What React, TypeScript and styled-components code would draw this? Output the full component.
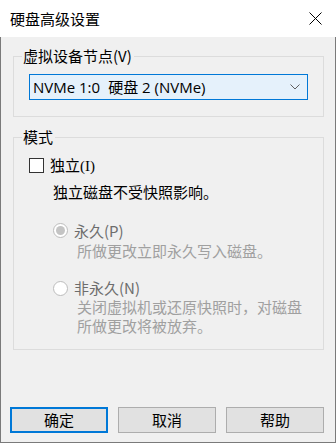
import React from "react";
import styled, { createGlobalStyle } from "styled-components";

const Global = createGlobalStyle`
  html, body { margin: 0; padding: 0; background: #ffffff; }
  body { font-family: "Noto Sans CJK SC", "Noto Sans", sans-serif; }
  * { box-sizing: border-box; }
`;

const Window = styled.div`
  width: 336px;
  height: 443px;
  display: flex;
  flex-direction: column;
  font-size: 15px;
  color: #000;
`;

const TitleBar = styled.div`
  height: 37px;
  flex: none;
  background: #ffffff;
  display: flex;
  align-items: center;
  justify-content: space-between;
  padding: 0 14px 0 10px;
  font-size: 15px;
  line-height: 18px;
`;

const Body = styled.div`
  flex: 1;
  background: #f0f0f0;
  border-left: 1px solid #7a7a7a;
  border-bottom: 1px solid #7a7a7a;
  border-right: 1px solid #7a7a7a;
  display: flex;
  flex-direction: column;
  padding: 11px 0 9px 12px;
`;

const Group = styled.fieldset<{ $gap?: number }>`
  width: 311px;
  margin: ${(p) => p.$gap ?? 0}px 0 0 0;
  padding: 0;
  border: 1px solid #dcdcdc;
  min-width: 0;
`;

const Legend = styled.legend`
  margin-left: 8px;
  padding: 0 2px 0 1px;
  font-size: 15px;
  line-height: 16px;
`;

const GroupInner = styled.div<{ $pt: number; $pb: number }>`
  padding: ${(p) => p.$pt}px 15px ${(p) => p.$pb}px 15px;
  display: flex;
  flex-direction: column;
`;

const Select = styled.div`
  width: 279px;
  height: 26px;
  border: 1px solid #0078d7;
  background: #e5f1fb;
  display: flex;
  align-items: center;
  justify-content: space-between;
  padding: 0 7px 0 3px;
  font-family: "Open Sans", "Noto Sans CJK SC", sans-serif;
  font-size: 15px;
  line-height: 18px;
`;

const SelectCjk = styled.span`
  font-family: "Noto Sans CJK SC", sans-serif;
`;

const Gap = styled.span`
  display: inline-block;
  width: 8px;
`;

const Row = styled.label<{ $mt: number; $indent: number }>`
  display: flex;
  align-items: center;
  gap: 6px;
  height: 18px;
  line-height: 18px;
  margin-top: ${(p) => p.$mt}px;
  margin-left: ${(p) => p.$indent}px;
`;

const Check = styled.span`
  width: 15px;
  height: 15px;
  border: 1px solid #333333;
  background: #ffffff;
  flex: none;
`;

const Radio = styled.span<{ $checked?: boolean }>`
  width: 15px;
  height: 15px;
  border-radius: 50%;
  border: 1px solid #bcbcbc;
  background: #ffffff;
  flex: none;
  display: flex;
  align-items: center;
  justify-content: center;
  &::after {
    content: "";
    display: ${(p) => (p.$checked ? "block" : "none")};
    width: 9px;
    height: 9px;
    border-radius: 50%;
    background: #c4c4c4;
  }
`;

const Serif = styled.span`
  font-family: "Liberation Serif", "Noto Sans CJK SC", serif;
`;

const Desc = styled.div<{ $mt: number; $indent: number; $disabled?: boolean }>`
  margin-top: ${(p) => p.$mt}px;
  margin-left: ${(p) => p.$indent}px;
  line-height: 18.5px;
  color: ${(p) => (p.$disabled ? "#a0a0a0" : "#000000")};
  width: 228px;
`;

const Muted = styled.span`
  color: #6d6d6d;
`;

const ButtonRow = styled.div`
  margin-top: auto;
  margin-left: -3px;
  display: flex;
  gap: 10px;
`;

const Button = styled.button<{ $default?: boolean }>`
  width: 98px;
  height: 26px;
  background: #e1e1e1;
  border: ${(p) => (p.$default ? "2px solid #0078d7" : "1px solid #adadad")};
  font-family: "Noto Sans CJK SC", sans-serif;
  font-size: 15px;
  line-height: 18px;
  color: #000;
  padding: 0;
  display: flex;
  align-items: center;
  justify-content: center;
`;

const CloseIcon = () => (
  <svg width="13" height="13" viewBox="0 0 13 13">
    <path d="M0.5 0.5 L12.5 12.5 M12.5 0.5 L0.5 12.5" stroke="#000" strokeWidth="1" fill="none" />
  </svg>
);

const Chevron = () => (
  <svg width="10" height="6" viewBox="0 0 10 6">
    <path d="M0.5 0.5 L5 5 L9.5 0.5" stroke="#606060" strokeWidth="1" fill="none" />
  </svg>
);

export default function App() {
  return (
    <>
      <Global />
      <Window>
        <TitleBar>
          <span>硬盘高级设置</span>
          <CloseIcon />
        </TitleBar>
        <Body>
          <Group>
            <Legend>虚拟设备节点(V)</Legend>
            <GroupInner $pt={10} $pb={16}>
              <Select>
                <span>
                  NVMe 1:0<Gap />
                  <SelectCjk>硬盘</SelectCjk> 2 (NVMe)
                </span>
                <Chevron />
              </Select>
            </GroupInner>
          </Group>
          <Group $gap={12}>
            <Legend>模式</Legend>
            <GroupInner $pt={11} $pb={14}>
              <Row $mt={0} $indent={0}>
                <Check />
                <span>
                  独立<Serif>(I)</Serif>
                </span>
              </Row>
              <Desc $mt={9} $indent={24}>独立磁盘不受快照影响。</Desc>
              <Row $mt={20} $indent={24}>
                <Radio $checked />
                <Muted>永久(P)</Muted>
              </Row>
              <Desc $mt={2} $indent={48} $disabled>
                所做更改立即永久写入磁盘。
              </Desc>
              <Row $mt={19} $indent={24}>
                <Radio />
                <Muted>非永久(N)</Muted>
              </Row>
              <Desc $mt={1} $indent={48} $disabled>
                关闭虚拟机或还原快照时，对磁盘所做更改将被放弃。
              </Desc>
            </GroupInner>
          </Group>
          <ButtonRow>
            <Button $default>确定</Button>
            <Button>取消</Button>
            <Button>帮助</Button>
          </ButtonRow>
        </Body>
      </Window>
    </>
  );
}
